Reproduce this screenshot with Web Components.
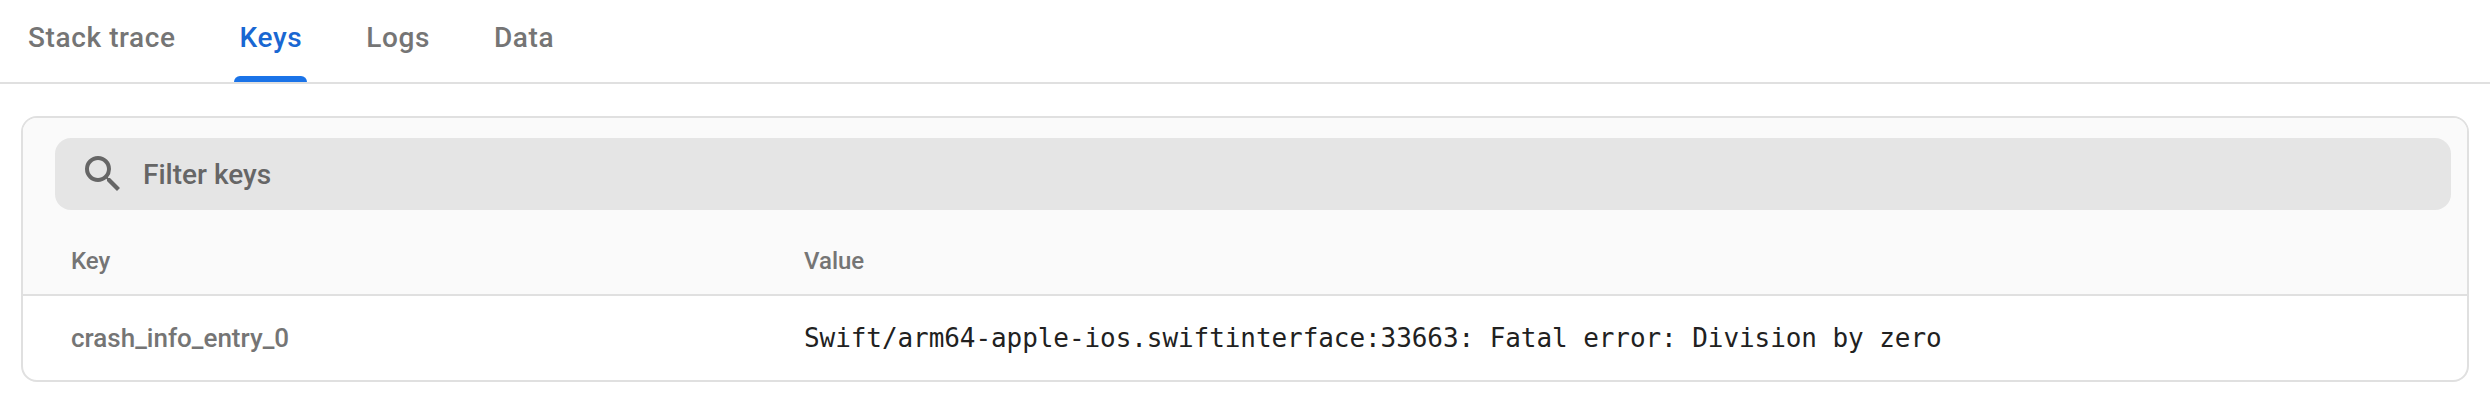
<!DOCTYPE html>
<html>
<head>
<meta charset="utf-8">
<title>Keys</title>
<style>
html, body { margin: 0; padding: 0; background: #fff; }
body { font-family: Roboto, "Liberation Sans", sans-serif; }
</style>
</head>
<body>
<crash-tabs>
  <crash-tab>Stack trace</crash-tab>
  <crash-tab active>Keys</crash-tab>
  <crash-tab>Logs</crash-tab>
  <crash-tab>Data</crash-tab>
</crash-tabs>
<keys-card>
  <filter-box slot="filter" placeholder="Filter keys"></filter-box>
  <key-row slot="head" head key="Key" value="Value"></key-row>
  <key-row slot="rows" key="crash_info_entry_0" value="Swift/arm64-apple-ios.swiftinterface:33663: Fatal error: Division by zero"></key-row>
</keys-card>
<script>
class CrashTabs extends HTMLElement {
  constructor() {
    super();
    this.attachShadow({mode: 'open'}).innerHTML = `
<style>
:host { display: flex; gap: 48px; height: 84px; box-sizing: border-box; border-bottom: 2px solid #e0e0e0; padding-left: 20px; }
</style>
<slot></slot>`;
  }
}
customElements.define('crash-tabs', CrashTabs);

class CrashTab extends HTMLElement {
  constructor() {
    super();
    this.attachShadow({mode: 'open'}).innerHTML = `
<style>
:host { display: block; position: relative; height: 82px; padding: 0 8px; font-size: 28px; font-weight: 500; line-height: 76px; letter-spacing: .6px; color: #757575; white-space: nowrap; }
:host([active]) { color: #1967d2; }
:host([active])::after { content: ''; position: absolute; left: 2px; right: 3px; bottom: 0; height: 6px; background: #1a73e8; border-radius: 6px 6px 0 0; }
</style>
<slot></slot>`;
  }
}
customElements.define('crash-tab', CrashTab);

class KeysCard extends HTMLElement {
  constructor() {
    super();
    this.attachShadow({mode: 'open'}).innerHTML = `
<style>
:host { display: block; box-sizing: border-box; width: 2448px; margin: 32px 0 0 21px; border: 2px solid #e0e0e0; border-radius: 16px; overflow: hidden; background: #fff; }
.top { background: #fafafa; padding: 20px 16px 0 32px; }
</style>
<div class="top"><slot name="filter"></slot><slot name="head"></slot></div>
<slot name="rows"></slot>`;
  }
}
customElements.define('keys-card', KeysCard);

class FilterBox extends HTMLElement {
  constructor() {
    super();
    this.attachShadow({mode: 'open'}).innerHTML = `
<style>
:host { display: flex; align-items: center; height: 72px; background: #e5e5e5; border-radius: 16px; color: #666; font-size: 28px; font-weight: 500; }
svg { width: 48px; height: 48px; margin: 0 16px 0 24px; fill: #666; display: block; }
</style>
<svg viewBox="0 0 24 24"><path d="M15.5 14h-.79l-.28-.27A6.47 6.47 0 0 0 16 9.5 6.5 6.5 0 1 0 9.5 16c1.61 0 3.09-.59 4.23-1.57l.27.28v.79l5 4.99L20.49 19l-4.99-5zm-6 0C7.01 14 5 11.99 5 9.5S7.01 5 9.5 5 14 7.01 14 9.5 11.99 14 9.5 14z"/></svg>
<span></span>`;
    this.shadowRoot.querySelector('span').textContent = this.getAttribute('placeholder');
  }
}
customElements.define('filter-box', FilterBox);

class KeyRow extends HTMLElement {
  constructor() {
    super();
    this.attachShadow({mode: 'open'}).innerHTML = `
<style>
:host { display: grid; grid-template-columns: 733px 1fr; align-items: center; box-sizing: border-box; height: 84px; padding-left: 48px; font-size: 26px; color: #757575; font-weight: 500; }
:host([head]) { height: 86px; margin: 0 -16px 0 -32px; padding-top: 18px; border-bottom: 2px solid #e0e0e0; font-size: 24px; }
.v { font-family: "DejaVu Sans Mono", "Liberation Mono", monospace; font-size: 26px; font-weight: 400; letter-spacing: -.07px; color: #212121; }
:host([head]) .v { font: inherit; letter-spacing: normal; color: inherit; }
</style>
<div class="k"></div><div class="v"></div>`;
    this.shadowRoot.querySelector('.k').textContent = this.getAttribute('key');
    this.shadowRoot.querySelector('.v').textContent = this.getAttribute('value');
  }
}
customElements.define('key-row', KeyRow);
</script>
</body>
</html>
